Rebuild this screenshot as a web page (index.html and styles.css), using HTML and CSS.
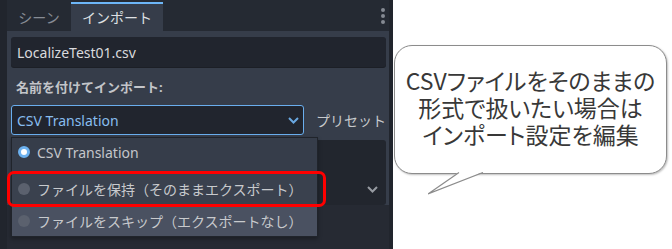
FILE: index.html
```html
<!DOCTYPE html>
<html>
<head>
  <title>インポート</title>
  <link rel="stylesheet" href="styles.css">
</head>
<body>
  <div class="dock">
    <div class="tabs">
      <div class="tab">シーン</div>
      <div class="tab active">インポート</div>
      <div class="dots">
        <svg width="6" height="18" viewBox="0 0 6 18"><circle cx="3" cy="3" r="2"/><circle cx="3" cy="9" r="2"/><circle cx="3" cy="15" r="2"/></svg>
      </div>
    </div>

    <div class="dock-body">
      <div class="file-field">LocalizeTest01.csv</div>
      <div class="label">名前を付けてインポート:</div>

      <div class="import-row">
        <div class="select focused">
          <span>CSV Translation</span>
          <svg class="chevron" width="11" height="7" viewBox="0 0 11 7"><path d="M1 1 L5.5 5.5 L10 1"/></svg>
        </div>
        <div class="preset">プリセット</div>
      </div>

      <div class="options-box">
        <svg class="chevron gray" width="11" height="7" viewBox="0 0 11 7"><path d="M1 1 L5.5 5.5 L10 1"/></svg>
      </div>
      <div class="inspector"></div>

      <!-- ドロップダウンのポップアップ -->
      <div class="popup">
        <div class="item first">
          <span class="radio checked"></span>CSV Translation
        </div>
        <div class="item second">
          <span class="radio"></span>ファイルを保持（そのままエクスポート）
        </div>
        <div class="item hover">
          <span class="radio"></span>ファイルをスキップ（エクスポートなし）
        </div>
      </div>

      <!-- 注目枠 -->
      <div class="mark"></div>
    </div>
  </div>

  <div class="note">
    <div class="bubble">
      <p>CSVファイルをそのままの<br>形式で扱いたい場合は<br>インポート設定を編集</p>
      <svg class="tail" width="60" height="26" viewBox="0 0 60 26">
        <polygon points="31,0 55,0 0,22" fill="#fff"/>
        <polyline points="31,0.5 0,22 55,0.5" fill="none" stroke="#8c8c8c" stroke-width="1.2"/>
      </svg>
    </div>
  </div>
</body>
</html>
```

FILE: styles.css
```css
/* 全体 */
body {
  margin: 0;
  width: 672px;
  height: 249px;
  display: flex;
  background-color: #fff;
  font-family: "Noto Sans", "Noto Sans CJK JP", sans-serif;
  overflow: hidden;
}

/* 左のドック */
.dock {
  width: 382px;
  height: 249px;
  padding: 0 4px 0 7px;
  background-color: #21252d;
  display: flex;
  flex-direction: column;
}

/* タブ */
.tabs {
  height: 29px;
  padding-top: 2px;
  display: flex;
  background-color: #252a33;
}

.tab {
  width: 64px;
  box-sizing: border-box;
  display: flex;
  align-items: center;
  justify-content: center;
  white-space: nowrap;
  font-size: 14px;
  color: #878c95;
}

.tab.active {
  width: 92px;
  border-top: 2px solid #6db6f7;
  padding-bottom: 2px;
  background-color: #363d4a;
  color: #dfe0e3;
}

.dots {
  margin-left: auto;
  width: 12px;
  display: flex;
  align-items: center;
  justify-content: center;
  padding-bottom: 2px;
}

.dots svg {
  fill: #858a93;
}

/* ドック本体 */
.dock-body {
  position: relative;
  flex: 1;
  display: flex;
  flex-direction: column;
  padding: 6px 3px 0 4px;
  background-color: #363d4a;
}

.file-field {
  height: 30px;
  padding-left: 6px;
  display: flex;
  align-items: center;
  background-color: #21252e;
  border-radius: 3px;
  box-shadow: 0 1px 0 #1c1f26;
  font-size: 14px;
  color: #d9dadd;
}

.label {
  margin: 10px 0 8px 5px;
  height: 20px;
  line-height: 20px;
  font-size: 13px;
  font-weight: bold;
  color: #c3c5c9;
}

.import-row {
  display: flex;
  align-items: center;
  gap: 12px;
}

.select {
  width: 282px;
  height: 28px;
  padding: 0 4px 0 5px;
  display: flex;
  align-items: center;
  justify-content: space-between;
  background-color: #21252e;
  border: 1.5px solid #6aaeee;
  border-radius: 3px;
  font-size: 14px;
  color: #88bdef;
}

.chevron {
  fill: none;
  stroke: #69a7e0;
  stroke-width: 2;
}

.chevron.gray {
  stroke: #979ba2;
}

.preset {
  font-size: 14px;
  color: #c7c9cc;
}

/* ポップアップ裏のボックス */
.options-box {
  margin-top: 5px;
  height: 65px;
  display: flex;
  align-items: flex-end;
  justify-content: flex-end;
  padding: 0 8px 12px 0;
  box-sizing: border-box;
  background-color: #22262e;
  border-radius: 3px;
}

.inspector {
  flex: 1;
  margin: 0 -3px 0 -4px;
  background-color: #262a33;
}

/* ポップアップ */
.popup {
  position: absolute;
  left: 4px;
  top: 106px;
  width: 305px;
  border: 1px solid #20242b;
  background-color: #363d4a;
  box-shadow: 0 2px 4px rgba(0, 0, 0, 0.3);
}

.item {
  display: flex;
  align-items: center;
  padding-left: 6px;
  font-size: 14px;
  color: #c8cacd;
}

.item.first {
  height: 33px;
  padding-bottom: 5px;
  box-sizing: border-box;
  color: #c4c6ca;
}

.item.second {
  height: 35px;
  background-color: #3a414e;
}

.item.hover {
  height: 30px;
  background-color: #4a5161;
}

.radio {
  width: 12px;
  height: 12px;
  margin-right: 7px;
  border-radius: 50%;
  background-color: #5b616e;
  box-sizing: border-box;
}

.radio.checked {
  background-color: #fff;
  border: 3px solid #6cb1ef;
}

/* 赤い注目枠 */
.mark {
  position: absolute;
  left: 0;
  top: 140px;
  width: 313px;
  height: 30px;
  border: 3px solid #ff0000;
  border-radius: 7px;
}

/* 右の吹き出し */
.note {
  flex: 1;
  padding: 45px 0 0 1px;
}

.bubble {
  position: relative;
  width: 271px;
  height: 127px;
  border: 1px solid #8c8c8c;
  border-radius: 18px;
  box-shadow: 1px 1px 2px rgba(0, 0, 0, 0.25);
  background-color: #fff;
}

.bubble p {
  margin: 21px 0 0;
  text-align: center;
  font-family: "Noto Sans CJK JP", sans-serif;
  font-feature-settings: "palt";
  font-size: 23px;
  line-height: 27px;
  color: #383838;
}

.tail {
  position: absolute;
  left: 33px;
  top: 126px;
}
```
